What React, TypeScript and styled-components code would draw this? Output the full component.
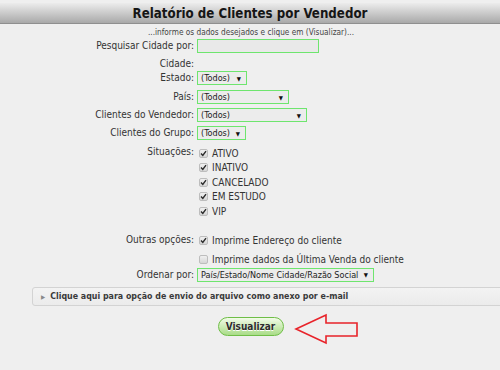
import React from "react";
import styled, { createGlobalStyle } from "styled-components";

const GlobalStyle = createGlobalStyle`
  html, body {
    margin: 0;
    padding: 0;
    background: #efefef;
    overflow: hidden;
  }
  body {
    font-family: "DejaVu Sans Condensed", "DejaVu Sans", Verdana, sans-serif;
    color: #333;
  }
`;

const Page = styled.div`
  width: 500px;
  height: 370px;
  padding-top: 3px;
  box-sizing: border-box;
`;

const Header = styled.div`
  height: 20px;
  background: linear-gradient(#ececec, #a9a9a9);
  border-bottom: 1px solid #8f8f8f;
  display: flex;
  align-items: center;
  justify-content: center;
`;

const Title = styled.h1`
  margin: 0;
  font-size: 13.2px;
  font-weight: bold;
  color: #161616;
`;

const Hint = styled.div`
  text-align: center;
  font-size: 8.2px;
  color: #444;
  margin-top: 3px;
  padding-left: 2px;
`;

const Row = styled.div<{ $mt: number; $top?: boolean }>`
  display: grid;
  grid-template-columns: 194px 1fr;
  column-gap: 3px;
  margin-top: ${(p) => p.$mt}px;
  align-items: ${(p) => (p.$top ? "start" : "center")};
  min-height: 14px;
`;

const Label = styled.label`
  text-align: right;
  font-size: 10px;
  color: #333;
  line-height: 14px;
`;

const TextInput = styled.div<{ $w: number }>`
  width: ${(p) => p.$w}px;
  height: 14px;
  box-sizing: border-box;
  border: 1px solid #6ee56e;
  background: #e9e9e9;
`;

const Select = styled.div<{ $w: number }>`
  width: ${(p) => p.$w}px;
  height: 14px;
  box-sizing: border-box;
  border: 1px solid #6ee56e;
  background: #ececec;
  display: flex;
  align-items: center;
  justify-content: space-between;
  gap: 4px;
  padding: 0 5px 0 3px;
  font-size: 9px;
  color: #222;
  white-space: nowrap;
  overflow: hidden;
`;

const Caret = styled.span`
  font-size: 6px;
  color: #111;
`;

const CheckList = styled.div`
  display: flex;
  flex-direction: column;
  padding-top: 1px;
`;

const CheckRow = styled.div`
  display: flex;
  align-items: center;
  height: 14.5px;
  gap: 4px;
  padding-left: 2px;
  font-size: 10px;
  color: #333;
`;

const Box = styled.span`
  width: 9px;
  height: 9px;
  box-sizing: border-box;
  border: 1px solid #bdbdbd;
  border-radius: 2px;
  background: linear-gradient(#f0f0f0, #d6d6d6);
  display: inline-flex;
  align-items: center;
  justify-content: center;
`;

const Check = ({ on, text }: { on: boolean; text: string }) => (
  <CheckRow>
    <Box>
      {on && (
        <svg width="7" height="7" viewBox="0 0 7 7">
          <path d="M1 3.6 L2.8 5.4 L6 1.2" fill="none" stroke="#2a2a2a" strokeWidth="1.4" />
        </svg>
      )}
    </Box>
    <span>{text}</span>
  </CheckRow>
);

const Spacer = styled.span`
  height: 4px;
`;

const Collapse = styled.div`
  margin: 5px 0 0 32px;
  width: 480px;
  height: 19px;
  box-sizing: border-box;
  border: 1px solid #d3d3d3;
  border-radius: 3px;
  background: linear-gradient(#f3f3f3, #ebebeb);
  display: flex;
  align-items: center;
  padding-left: 8px;
  gap: 5px;
  font-size: 8.8px;
  font-weight: bold;
  color: #3a3a3a;
`;

const Tri = styled.span`
  font-size: 6px;
  color: #888;
`;

const ButtonRow = styled.div`
  position: relative;
  display: flex;
  justify-content: center;
  margin-top: 11px;
  padding-left: 1px;
`;

const Button = styled.button`
  width: 66px;
  height: 19px;
  border-radius: 10px;
  border: 1px solid #6fbe47;
  background: linear-gradient(#f2fbe9, #c9eab1 55%, #a9dc88);
  font-family: "DejaVu Sans Condensed", "DejaVu Sans", sans-serif;
  font-size: 10px;
  font-weight: bold;
  color: #2c2c2c;
  text-shadow: 0 1px 0 #fff;
  padding: 0;
`;

const Arrow = styled.svg`
  position: absolute;
  left: 294px;
  top: -8px;
`;

export default function App() {
  return (
    <>
      <GlobalStyle />
      <Page>
        <Header>
          <Title>Relatório de Clientes por Vendedor</Title>
        </Header>
        <Hint>...informe os dados desejados e clique em (Visualizar)...</Hint>
        <Row $mt={2}>
          <Label>Pesquisar Cidade por:</Label>
          <TextInput $w={122} />
        </Row>
        <Row $mt={4}>
          <Label>Cidade:</Label>
          <span />
        </Row>
        <Row $mt={0}>
          <Label>Estado:</Label>
          <Select $w={50}>
            <span>(Todos)</span>
            <Caret>▼</Caret>
          </Select>
        </Row>
        <Row $mt={5}>
          <Label>País:</Label>
          <Select $w={92}>
            <span>(Todos)</span>
            <Caret>▼</Caret>
          </Select>
        </Row>
        <Row $mt={4}>
          <Label>Clientes do Vendedor:</Label>
          <Select $w={110}>
            <span>(Todos)</span>
            <Caret>▼</Caret>
          </Select>
        </Row>
        <Row $mt={4}>
          <Label>Clientes do Grupo:</Label>
          <Select $w={49}>
            <span>(Todos)</span>
            <Caret>▼</Caret>
          </Select>
        </Row>
        <Row $mt={5} $top>
          <Label>Situações:</Label>
          <CheckList>
            <Check on text="ATIVO" />
            <Check on text="INATIVO" />
            <Check on text="CANCELADO" />
            <Check on text="EM ESTUDO" />
            <Check on text="VIP" />
          </CheckList>
        </Row>
        <Row $mt={14} $top>
          <Label>Outras opções:</Label>
          <CheckList>
            <Check on text="Imprime Endereço do cliente" />
            <Spacer />
            <Check on={false} text="Imprime dados da Última Venda do cliente" />
          </CheckList>
        </Row>
        <Row $mt={1}>
          <Label>Ordenar por:</Label>
          <Select $w={177}>
            <span>País/Estado/Nome Cidade/Razão Social</span>
            <Caret>▼</Caret>
          </Select>
        </Row>
        <Collapse>
          <Tri>▶</Tri>
          Clique aqui para opção de envio do arquivo como anexo por e-mail
        </Collapse>
        <ButtonRow>
          <Button>Visualizar</Button>
          <Arrow width="66" height="38" viewBox="294 308 66 38">
            <polygon
              points="296,328 326,314 326,322 357,322 357,335 326,335 326,342"
              fill="none"
              stroke="#e8232a"
              strokeWidth="1.6"
            />
          </Arrow>
        </ButtonRow>
      </Page>
    </>
  );
}
